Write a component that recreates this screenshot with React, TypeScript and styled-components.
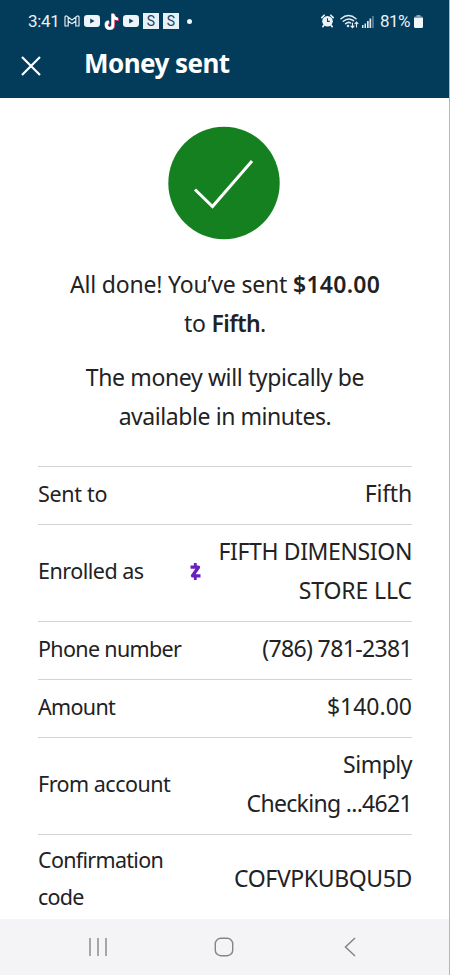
import React from "react";
import styled, { createGlobalStyle } from "styled-components";

const GlobalStyle = createGlobalStyle`
  * { box-sizing: border-box; }
  body { margin: 0; background: #fff; }
`;

const Screen = styled.div`
  width: 450px;
  height: 975px;
  overflow: hidden;
  display: flex;
  flex-direction: column;
  background: #fff;
  border-right: 1px solid #b4b6b9;
  color: #222224;
  font-family: "Noto Sans", "Open Sans", sans-serif;
`;

const Header = styled.header`
  height: 98px;
  flex: none;
  margin-right: -1px;
  background: #033b5a;
  border-right: 1px solid #0a2c43;
  color: #fff;
`;

const StatusBar = styled.div`
  height: 42px;
  padding: 0 26px 0 28px;
  display: flex;
  justify-content: space-between;
  align-items: center;
  font-family: Roboto, sans-serif;
  font-size: 17px;
  color: #e9f1f6;
`;

const StatusGroup = styled.div`
  display: flex;
  align-items: center;
`;

const Clock = styled.span`
  width: 36px;
  letter-spacing: -0.3px;
`;

const Percent = styled.span`
  width: 34px;
  letter-spacing: -0.6px;
`;

const Icon = styled.svg<{ $gap?: number }>`
  display: block;
  flex: none;
  margin-right: ${(p) => p.$gap ?? 0}px;
`;

const AppBadge = styled.span`
  width: 16px;
  height: 16px;
  margin-right: 4px;
  background: #e6f0f7;
  color: #1c4460;
  font-size: 14px;
  line-height: 16px;
  text-align: center;
`;

const Dot = styled.span`
  width: 5px;
  height: 5px;
  margin-left: 4px;
  border-radius: 50%;
  background: #f1f6fa;
`;

const TitleBar = styled.div`
  height: 48px;
  padding-left: 21px;
  display: flex;
  align-items: center;
`;

const CloseButton = styled.button`
  width: 63px;
  padding: 0;
  border: 0;
  background: none;
  color: #fff;
`;

const Title = styled.h1`
  margin: -7px 0 0;
  font-size: 26px;
  font-weight: 700;
  line-height: 40px;
  letter-spacing: -0.55px;
`;

const Content = styled.main`
  flex: 1;
  min-height: 0;
  overflow: hidden;
  padding: 28px 37px 0 38px;
`;

const Success = styled.div`
  display: flex;
  justify-content: center;
  padding-right: 2px;
  margin-bottom: 25px;
`;

const Message = styled.p`
  margin: 0 0 14px;
  font-size: 23px;
  line-height: 39.4px;
  text-align: center;
`;

const Line = styled.span<{ $spacing?: number }>`
  display: block;
  white-space: nowrap;
  letter-spacing: ${(p) => p.$spacing ?? 0}px;
`;

const Strong = styled.strong<{ $spacing: number }>`
  font-weight: 600;
  letter-spacing: ${(p) => p.$spacing}px;
`;

const Details = styled.dl`
  margin: 29px 0 0;
`;

const Row = styled.div`
  display: flex;
  justify-content: space-between;
  align-items: center;
  border-top: 1px solid #d3d3d5;
  padding: 7.4px 0 10.1px;
`;

const Label = styled.dt`
  margin-top: -1px;
  font-size: 21.5px;
  line-height: 37px;
`;

const Value = styled.dd`
  margin: 0;
  display: flex;
  align-items: center;
  font-size: 23px;
  line-height: 39.4px;
  text-align: right;
`;

const NavBar = styled.nav`
  height: 56px;
  flex: none;
  background: #f4f4f7;
  display: grid;
  grid-template-columns: 20px 20px 12px;
  column-gap: 106px;
  align-items: center;
  padding-left: 88px;
`;

const BackIcon = styled.svg`
  display: block;
  margin-left: 4px;
`;

type LineText = [text: string, spacing: number];
interface Detail {
  label: LineText[];
  value: LineText[];
  zelle?: boolean;
}

const details: Detail[] = [
  { label: [["Sent to", -0.3]], value: [["Fifth", -0.2]] },
  {
    label: [["Enrolled as", -0.5]],
    value: [["FIFTH DIMENSION", -0.37], ["STORE LLC", -0.1]],
    zelle: true,
  },
  { label: [["Phone number", -0.66]], value: [["(786) 781-2381", -0.64]] },
  { label: [["Amount", -0.67]], value: [["$140.00", 0]] },
  { label: [["From account", -0.5]], value: [["Simply", -0.5], ["Checking ...4621", -0.69]] },
  { label: [["Confirmation", -0.7], ["code", -0.8]], value: [["COFVPKUBQU5D", -0.37]] },
];

const YouTubeIcon = ({ gap }: { gap: number }) => (
  <Icon width="16" height="12" viewBox="0 0 16 12" $gap={gap}>
    <rect width="16" height="12" rx="3.2" fill="#eef5fa" />
    <path d="M6.2 3.5v5l4.4-2.5z" fill="#143f5b" />
  </Icon>
);

const note = "M6.6 0.6h2.3c.2 2 1.400 3.300 3.300 3.500v2.400c-1.300 0-2.400-.4-3.300-1v5.200a4.100 4.100 0 1 1-4.700-4.100v2.500a1.700 1.700 0 1 0 2.400 1.600z";

const Lines = ({ items }: { items: LineText[] }) => (
  <div>
    {items.map(([text, spacing]) => (
      <Line key={text} $spacing={spacing}>{text}</Line>
    ))}
  </div>
);

export default function App() {
  return (
    <Screen>
      <GlobalStyle />
      <Header>
        <StatusBar>
          <StatusGroup>
            <Clock>3:41</Clock>
            <Icon width="16" height="12" viewBox="0 0 16 12" $gap={4} fill="none" stroke="#e2ecf2" strokeWidth="1.2" strokeLinejoin="round">
              <path d="M1 11V2.200Q1 .7 2.600 1L8 5l5.400-4Q15 .7 15 2.200V11h-3.200V6L8 8.700 4.200 6v5z M4.200 2.400V6 M11.800 2.400V6" />
            </Icon>
            <YouTubeIcon gap={4} />
            <Icon width="15" height="17" viewBox="0 0 13 15" $gap={4}>
              <path d={note} fill="#e94064" transform="translate(.8 .6)" />
              <path d={note} fill="#70dce5" transform="translate(-.4 -.2)" />
              <path d={note} fill="#fff" />
            </Icon>
            <YouTubeIcon gap={4} />
            <AppBadge>S</AppBadge>
            <AppBadge>S</AppBadge>
            <Dot />
          </StatusGroup>
          <StatusGroup>
            <Icon width="13" height="14" viewBox="0 0 13 14" $gap={6}>
              <path d="M.8 3.600 3.200 1.200M12.200 3.600 9.800 1.200M3 11l-1.200 1.700M10 11l1.200 1.700" stroke="#edf4f8" strokeWidth="1.600" strokeLinecap="round" />
              <circle cx="6.500" cy="7.200" r="5.300" fill="#edf4f8" />
              <path d="M6.500 4.200v3.200h2.300" fill="none" stroke="#143f5b" strokeWidth="1.100" />
            </Icon>
            <Icon width="19" height="15" viewBox="0 0 19 15" $gap={3} fill="none" stroke="#e4eef4" strokeWidth="1.500" strokeLinecap="round">
              <path d="M1 4.700Q8.500-1.700 16 4.700M3.300 7.300Q8.500 2.900 13.500 6.700M5.600 9.800Q8.300 7.400 10.600 9" />
              <circle cx="8" cy="12" r=".5" />
              <path d="M12.500 9v4.500M11 12l1.500 1.600 1.500-1.600M16.500 13V8M15 9.600 16.500 8 18 9.600" strokeWidth="1.100" />
            </Icon>
            <Icon width="12" height="13" viewBox="0 0 12 13" $gap={6} fill="#dfe9f0">
              <path d="M0 10h1.500v3H0zM2.500 8.500H4V13H2.500zM5 6h1.700v7H5zM7.500 3.500h1.700V13H7.500z" />
              <path d="M10.200 1h1.500v12h-1.500z" opacity=".45" />
            </Icon>
            <Percent>81%</Percent>
            <Icon width="9" height="13" viewBox="0 0 9 13">
              <path d="M2.500 0h4v1.500H8Q9 1.500 9 3H0Q0 1.500 1 1.500h1.500z" fill="#8aa4b5" />
              <path d="M0 3h9v8.500Q9 13 7.500 13h-6Q0 13 0 11.500z" fill="#f2f7fa" />
            </Icon>
          </StatusGroup>
        </StatusBar>
        <TitleBar>
          <CloseButton aria-label="Close">
            <Icon width="20" height="20" viewBox="0 0 20 20" stroke="currentColor" strokeWidth="2.200">
              <path d="M1 1l18 18M19 1 1 19" />
            </Icon>
          </CloseButton>
          <Title>Money sent</Title>
        </TitleBar>
      </Header>

      <Content>
        <Success>
          <Icon width="112" height="114" viewBox="0 0 112 114">
            <ellipse cx="56" cy="57" rx="55.700" ry="56.300" fill="#14801f" />
            <path d="M27 63.500 44.500 80.500 84 35" fill="none" stroke="#fff" strokeWidth="3" />
          </Icon>
        </Success>
        <Message>
          <Line $spacing={-0.18}>All done! You’ve sent <Strong $spacing={0.25}>$140.00</Strong></Line>
          <Line $spacing={-0.2}>to <Strong $spacing={-0.6}>Fifth</Strong>.</Line>
        </Message>
        <Message>
          <Line $spacing={-0.37}>The money will typically be</Line>
          <Line $spacing={-0.43}>available in minutes.</Line>
        </Message>
        <Details>
          {details.map((d) => (
            <Row key={d.label[0][0]}>
              <Label><Lines items={d.label} /></Label>
              <Value>
                {d.zelle && (
                  <Icon width="11" height="17" viewBox="0 0 11 17" $gap={17} fill="none" stroke="#6a1fc0">
                    <path d="M.5 4.200h8L2.500 12.800h8" strokeWidth="3.300" strokeLinejoin="round" />
                    <path d="M5.300 0v4M5.300 13v4" strokeWidth="2.800" />
                  </Icon>
                )}
                <Lines items={d.value} />
              </Value>
            </Row>
          ))}
        </Details>
      </Content>

      <NavBar>
        <Icon width="20" height="20" viewBox="0 0 20 20" stroke="#858589" strokeWidth="1.400">
          <path d="M2 1v18M10 1v18M18 1v18" />
        </Icon>
        <Icon width="20" height="20" viewBox="0 0 20 20" fill="none" stroke="#858589" strokeWidth="1.400">
          <rect x="1.300" y="1.300" width="17.400" height="17.400" rx="5.500" />
        </Icon>
        <BackIcon width="12" height="20" viewBox="0 0 12 20" fill="none" stroke="#858589" strokeWidth="1.500">
          <path d="M11 1 1.500 10 11 19" />
        </BackIcon>
      </NavBar>
    </Screen>
  );
}
